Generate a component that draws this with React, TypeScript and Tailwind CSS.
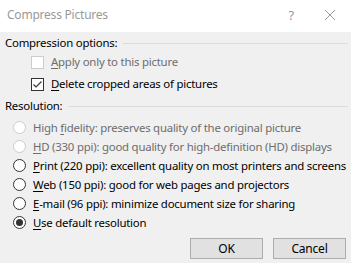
import React from "react";

const font = { fontFamily: "'Noto Sans', sans-serif" };

function U({ children }: { children: React.ReactNode }) {
  return <span className="underline underline-offset-2">{children}</span>;
}

function Check({ checked, disabled, children }: { checked?: boolean; disabled?: boolean; children: React.ReactNode }) {
  return (
    <div className="flex h-[22px] items-center pl-[31px]">
      <div
        className={`flex h-[13px] w-[13px] shrink-0 items-center justify-center border bg-white ${
          disabled ? "border-[#cccccc]" : "border-[#333333]"
        }`}
      >
        {checked && (
          <svg width="11" height="11" viewBox="0 0 11 11">
            <polyline points="1.5,5.5 4,8 9.5,2.5" fill="none" stroke="#333" strokeWidth="1.1" />
          </svg>
        )}
      </div>
      <span className={`ml-[7px] whitespace-nowrap ${disabled ? "text-[#6d6d6d]" : "text-black"}`}>{children}</span>
    </div>
  );
}

function Radio({ checked, disabled, children }: { checked?: boolean; disabled?: boolean; children: React.ReactNode }) {
  return (
    <div className="flex h-[19px] items-center pl-[13px]">
      <div
        className={`flex h-[13px] w-[13px] shrink-0 items-center justify-center rounded-full border bg-white ${
          disabled ? "border-[#cccccc]" : "border-[#333333]"
        }`}
      >
        {checked && <div className="h-[7px] w-[7px] rounded-full bg-[#333333]" />}
      </div>
      <span className={`ml-[7px] whitespace-nowrap ${disabled ? "text-[#6d6d6d]" : "text-black"}`}>{children}</span>
    </div>
  );
}

function Header({ children }: { children: React.ReactNode }) {
  return (
    <div className="flex h-[16px] items-center pl-[5px] pr-[3px]">
      <span className="whitespace-nowrap text-black">{children}</span>
      <div className="ml-[6px] h-px flex-1 bg-[#dcdcdc]" />
    </div>
  );
}

export default function App() {
  return (
    <div
      className="flex h-[263px] w-[351px] flex-col overflow-hidden bg-[#f0f0f0] text-[11.4px] leading-[16px] tracking-[-0.22px]"
      style={font}
    >
      <div className="flex h-[32px] items-center bg-white pb-[3px]">
        <span className="pl-[7px] text-[12px] text-[#999999]">Compress Pictures</span>
        <span className="ml-auto mr-[30px] text-[13px] text-[#999999]">?</span>
        <svg width="12" height="12" viewBox="0 0 12 12" className="mr-[15px]">
          <path d="M1 1 L11 11 M11 1 L1 11" stroke="#999" strokeWidth="1" />
        </svg>
      </div>
      <div className="flex flex-col pt-[3px]">
        <Header>Compression options:</Header>
        <Check disabled>
          <U>A</U>pply only to this picture
        </Check>
        <Check checked>
          <U>D</U>elete cropped areas of pictures
        </Check>
        <div className="mt-[3px]">
          <Header>Resolution:</Header>
        </div>
        <div className="mt-[4px] flex flex-col">
          <Radio disabled>
            High <U>f</U>idelity: preserves quality of the original picture
          </Radio>
          <Radio disabled>
            <U>H</U>D (330 ppi): good quality for high-definition (HD) displays
          </Radio>
          <Radio>
            <U>P</U>rint (220 ppi): excellent quality on most printers and screens
          </Radio>
          <Radio>
            <U>W</U>eb (150 ppi): good for web pages and projectors
          </Radio>
          <Radio>
            <U>E</U>-mail (96 ppi): minimize document size for sharing
          </Radio>
          <Radio checked>
            <U>U</U>se default resolution
          </Radio>
        </div>
        <div className="mt-[6px] flex justify-end gap-[10px] pr-[5px]">
          <button className="h-[21px] w-[73px] border border-[#adadad] bg-[#e1e1e1] text-[12px] text-black">OK</button>
          <button className="h-[21px] w-[73px] border border-[#adadad] bg-[#e1e1e1] text-[12px] text-black">Cancel</button>
        </div>
      </div>
    </div>
  );
}
